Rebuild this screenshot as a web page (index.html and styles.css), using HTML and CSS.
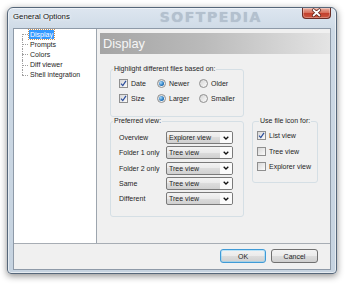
FILE: index.html
```html
<!DOCTYPE html>
<html lang="en">
<head>
  <meta charset="UTF-8" />
  <title>General Options</title>
  <link rel="stylesheet" href="styles.css">
</head>
<body>
  <div class="window">
    <div class="titlebar">
      <span class="title">General Options</span>
      <span class="watermark">SOFTPEDIA</span>
      <button class="close" aria-label="Close">
        <svg width="29" height="11" viewBox="0 0 29 11">
          <path d="M11.5 3 L17.5 8.5 M17.5 3 L11.5 8.5" stroke="#5a1f16" stroke-width="3.2" stroke-linecap="round" />
          <path d="M11.5 3 L17.5 8.5 M17.5 3 L11.5 8.5" stroke="#fff" stroke-width="1.7" stroke-linecap="round" />
        </svg>
      </button>
    </div>

    <div class="client">
      <div class="main">
        <!-- left navigation tree -->
        <ul class="tree">
          <li><span class="selected">Display</span></li>
          <li><span>Prompts</span></li>
          <li><span>Colors</span></li>
          <li><span>Diff viewer</span></li>
          <li><span>Shell integration</span></li>
        </ul>

        <div class="pane">
          <div class="banner">Display</div>

          <div class="pane-body">
            <fieldset class="group group-highlight">
              <legend>Highlight different files based on:</legend>
              <div class="opt-grid">
                <div class="opt"><span class="cb"><svg width="7" height="7" viewBox="0 0 7 7"><path d="M1 3.6 L2.8 5.6 L6 0.8" fill="none" stroke="#2a4d9b" stroke-width="1.2" /></svg></span>Date</div>
                <div class="opt"><span class="rb on"></span>Newer</div>
                <div class="opt"><span class="rb"></span>Older</div>
                <div class="opt"><span class="cb"><svg width="7" height="7" viewBox="0 0 7 7"><path d="M1 3.6 L2.8 5.6 L6 0.8" fill="none" stroke="#2a4d9b" stroke-width="1.2" /></svg></span>Size</div>
                <div class="opt"><span class="rb on"></span>Larger</div>
                <div class="opt"><span class="rb"></span>Smaller</div>
              </div>
            </fieldset>

            <fieldset class="group group-views">
              <legend>Preferred view:</legend>
              <div class="view-grid">
                <span>Overview</span>
                <div class="combo"><span>Explorer view</span><i class="arrow"><svg width="6" height="4" viewBox="0 0 6 4"><path d="M0.7 0.7 L3 3 L5.3 0.7" fill="none" stroke="#111" stroke-width="1.3" /></svg></i></div>
                <span>Folder 1 only</span>
                <div class="combo"><span>Tree view</span><i class="arrow"><svg width="6" height="4" viewBox="0 0 6 4"><path d="M0.7 0.7 L3 3 L5.3 0.7" fill="none" stroke="#111" stroke-width="1.3" /></svg></i></div>
                <span>Folder 2 only</span>
                <div class="combo"><span>Tree view</span><i class="arrow"><svg width="6" height="4" viewBox="0 0 6 4"><path d="M0.7 0.7 L3 3 L5.3 0.7" fill="none" stroke="#111" stroke-width="1.3" /></svg></i></div>
                <span>Same</span>
                <div class="combo"><span>Tree view</span><i class="arrow"><svg width="6" height="4" viewBox="0 0 6 4"><path d="M0.7 0.7 L3 3 L5.3 0.7" fill="none" stroke="#111" stroke-width="1.3" /></svg></i></div>
                <span>Different</span>
                <div class="combo"><span>Tree view</span><i class="arrow"><svg width="6" height="4" viewBox="0 0 6 4"><path d="M0.7 0.7 L3 3 L5.3 0.7" fill="none" stroke="#111" stroke-width="1.3" /></svg></i></div>
              </div>
            </fieldset>

            <fieldset class="group group-icons">
              <legend>Use file icon for:</legend>
              <div class="opt"><span class="cb"><svg width="7" height="7" viewBox="0 0 7 7"><path d="M1 3.6 L2.8 5.6 L6 0.8" fill="none" stroke="#2a4d9b" stroke-width="1.2" /></svg></span>List view</div>
              <div class="opt"><span class="cb"></span>Tree view</div>
              <div class="opt"><span class="cb"></span>Explorer view</div>
            </fieldset>
          </div>
        </div>
      </div>

      <div class="footer">
        <button class="btn btn-default">OK</button>
        <button class="btn">Cancel</button>
      </div>
    </div>
  </div>
</body>
</html>
```

FILE: styles.css
```css
* {
  box-sizing: border-box;
}

html, body {
  margin: 0;
  height: 100%;
}

body {
  background: #fff;
  font-family: "Liberation Sans", Arial, sans-serif;
  font-size: 7px;
  color: #1e1e1e;
  padding: 7px 0 0 7px;
}

/* Window frame (Aero glass look) */

.window {
  width: 330px;
  height: 267px;
  border: 1px solid #56677a;
  border-radius: 6px 6px 4px 4px;
  background: linear-gradient(#dde6f0, #cdd9e5 24px, #c6d3e0);
  box-shadow: 0 2px 7px rgba(0, 0, 0, 0.45), inset 0 0 0 1px rgba(255, 255, 255, 0.55);
  padding: 0 5px 3px;
  display: flex;
  flex-direction: column;
}

.titlebar {
  height: 20px;
  display: flex;
  align-items: flex-start;
  flex-shrink: 0;
}

.title {
  font-size: 7.8px;
  line-height: 18px;
  color: #111;
  text-shadow: 0 0 4px #fff, 0 0 2px #fff;
}

.watermark {
  margin-left: 90px;
  font-family: "DejaVu Sans", sans-serif;
  font-weight: bold;
  font-size: 14px;
  letter-spacing: 1.5px;
  line-height: 19px;
  color: #b3c0ce;
  text-shadow: 0 0 1px #b3c0ce;
}

.close {
  margin-left: auto;
  width: 29px;
  height: 11px;
  padding: 0;
  border: 1px solid #6a2d26;
  border-top: none;
  border-radius: 0 0 4px 4px;
  background: linear-gradient(#eab0a2, #d8735f 45%, #c2402d 52%, #cc5640);
  box-shadow: inset 0 0 0 1px rgba(255, 255, 255, 0.3);
}

.close svg {
  display: block;
  margin: -1px 0 0 -1px;
}

/* Client area */

.client {
  flex: 1;
  background: #f0f0f0;
  border: 1px solid #8e9aa8;
  display: flex;
  flex-direction: column;
}

.main {
  height: 215px;
  display: flex;
  border-bottom: 1px solid #a7adb4;
  flex-shrink: 0;
}

.tree {
  width: 83px;
  margin: 0;
  padding: 0 0 0 15px;
  list-style: none;
  background: #fff;
  border-right: 1px solid #9da5ae;
}

.tree li {
  position: relative;
  height: 10.2px;
  line-height: 10px;
  white-space: nowrap;
}

.tree li::before {
  content: "";
  position: absolute;
  left: -7px;
  top: 0;
  bottom: 0;
  border-left: 1px dotted #a0a0a0;
}

.tree li:first-child::before {
  top: 50%;
}

.tree li:last-child::before {
  bottom: 50%;
}

.tree li::after {
  content: "";
  position: absolute;
  left: -7px;
  top: 50%;
  width: 6px;
  border-top: 1px dotted #a0a0a0;
}

.tree span {
  display: inline-block;
  padding: 0 1px;
  line-height: 9px;
  vertical-align: top;
  margin-top: 0.5px;
}

.tree .selected {
  background: #3399ff;
  color: #fff;
  outline: 1px dotted #c98f52;
}

/* Right pane */

.pane {
  flex: 1;
  padding: 4px 0 0 3px;
}

.banner {
  height: 21px;
  background: linear-gradient(90deg, #a5a5a5, #bababa 45%, #e4e4e4);
  color: #f6f6f6;
  font-size: 12.8px;
  line-height: 21px;
  padding-left: 3px;
}

.pane-body {
  display: grid;
  grid-template-columns: 134px 66px;
  column-gap: 8px;
  align-items: start;
  margin: 11px 0 0 10px;
}

.group {
  margin: 0;
  padding: 3px 0 10px;
  border: 1px solid #d5dfe5;
  border-radius: 3px;
  min-width: 0;
}

.group legend {
  margin-left: 2px;
  padding: 0 1px;
  line-height: 8px;
}

.group-highlight {
  grid-column: 1;
}

.group-views {
  grid-column: 1;
  padding-top: 5px;
}

.group-icons {
  grid-column: 2;
  grid-row: 2;
  padding: 3px 0 7px 4px;
}

.opt-grid {
  display: grid;
  grid-template-columns: 38px 42px 1fr;
  padding-left: 8px;
}

.opt {
  display: flex;
  align-items: center;
  gap: 3px;
  height: 15px;
  white-space: nowrap;
}

.group-icons .opt {
  height: 15.5px;
}

.cb {
  width: 9px;
  height: 9px;
  flex: none;
  border: 1px solid #8f8f8f;
  background: linear-gradient(135deg, #d8d8d8, #fbfbfb);
  display: flex;
  align-items: center;
  justify-content: center;
}

.cb svg {
  display: block;
}

.rb {
  width: 9px;
  height: 9px;
  flex: none;
  border-radius: 50%;
  border: 1px solid #8f8f8f;
  background: linear-gradient(135deg, #d4d4d4, #fcfcfc);
  display: flex;
  align-items: center;
  justify-content: center;
}

.rb.on::after {
  content: "";
  width: 5px;
  height: 5px;
  border-radius: 50%;
  background: radial-gradient(circle at 35% 35%, #a8dcff, #2577bd 60%, #0d4a86);
}

.view-grid {
  display: grid;
  grid-template-columns: 47px 67px;
  grid-auto-rows: 15.25px;
  align-items: center;
  padding-left: 8px;
  white-space: nowrap;
}

.combo {
  display: flex;
  height: 13px;
  border: 1px solid #7a7a7a;
  border-radius: 2px;
  background: linear-gradient(#f3f3f3, #e9e9e9 50%, #dcdcdc 50%, #d0d0d0);
}

.combo span {
  flex: 1;
  padding-left: 2px;
  line-height: 11px;
}

.combo .arrow {
  width: 12px;
  background: #fbfbfb;
  border-radius: 0 1px 1px 0;
  display: flex;
  align-items: center;
  justify-content: center;
}

.combo .arrow svg {
  display: block;
}

/* Footer buttons */

.footer {
  flex: 1;
  display: flex;
  justify-content: flex-end;
  align-items: flex-start;
  gap: 5px;
  padding: 5px 12px 0 0;
}

.btn {
  width: 47px;
  height: 14px;
  padding: 0;
  border: 1px solid #707070;
  border-radius: 3px;
  background: linear-gradient(#f2f2f2, #ebebeb 50%, #dddddd 50%, #cfcfcf);
  font-family: inherit;
  font-size: 7px;
  color: #1e1e1e;
}

.btn-default {
  width: 46px;
  border-color: #3f9ad6;
  box-shadow: inset 0 0 0 1px rgba(120, 210, 255, 0.45);
}
```
